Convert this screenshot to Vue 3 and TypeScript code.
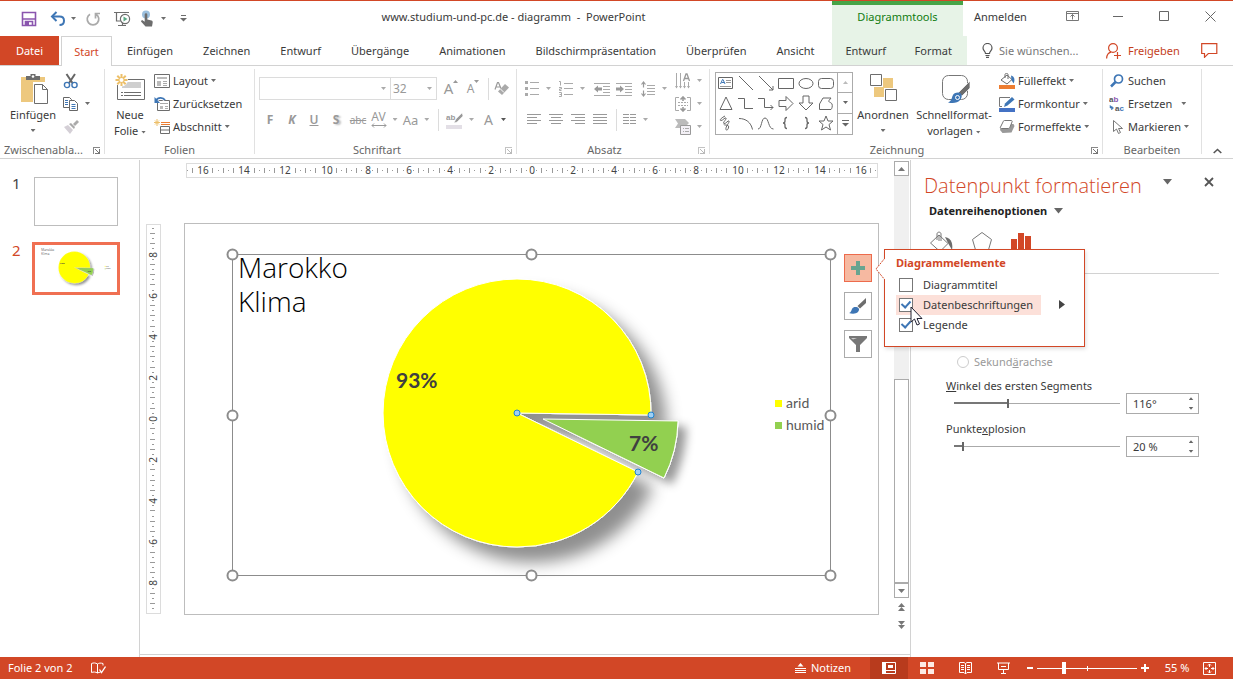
<script setup lang="ts">
import { ref } from 'vue'

interface Tick { pos: number; major: boolean }
interface Mark { pos: number; label: string }

const UNIT = 20.55

function buildTicks(range: number): Tick[] {
  const out: Tick[] = []
  for (let q = -range * 4; q <= range * 4; q++) {
    const distance = Math.abs(q) % 8
    const unit = Math.abs(q) / 4
    const gap = Math.min(distance, 8 - distance)
    if (gap === 0) continue
    if (gap === 1 && unit > 9.5) continue
    out.push({ pos: Math.round(q * UNIT / 4), major: q % 2 === 0 })
  }
  return out
}

function buildMarks(max: number): Mark[] {
  const out: Mark[] = []
  for (let v = -max; v <= max; v += 2) out.push({ pos: Math.round(v * UNIT), label: String(Math.abs(v)) })
  return out
}

const hTicks = buildTicks(16.75)
const hMarks = buildMarks(16)
const vTicks = buildTicks(9.25)
const vMarks = buildMarks(8)

const tabs = ['Einfügen', 'Zeichnen', 'Entwurf', 'Übergänge', 'Animationen', 'Bildschirmpräsentation', 'Überprüfen', 'Ansicht']

const elements = ref([
  { id: 'el-title', label: 'Diagrammtitel', on: false, hot: false },
  { id: 'el-labels', label: 'Datenbeschriftungen', on: true, hot: true },
  { id: 'el-legend', label: 'Legende', on: true, hot: false },
])

const angle = ref(116)
const explosion = ref(20)
const zoom = ref(26)

const handles = [
  [48, 31], [347, 31], [646, 31],
  [48, 192], [646, 192],
  [48, 352], [347, 352], [646, 352],
]
const points = [[333, 190], [467, 192], [454, 249]]
</script>

<template>
  <div class="window">
    <header class="titlebar">
      <div class="quick">
        <button class="flat" aria-label="Speichern">
          <svg width="16" height="16" viewBox="0 0 16 16"><path d="M1.500 1.500h13v13h-13z" fill="none" stroke="#8a55ae" stroke-width="1.600" /><path d="M1.500 8h13M4.500 14v-3.500h7V14" fill="none" stroke="#8a55ae" stroke-width="1.600" /><path d="M4 11h4v4H4z" fill="#8a55ae" /></svg>
        </button>
        <button class="flat undo" aria-label="Rückgängig">
          <svg width="16" height="16" viewBox="0 0 16 16"><path d="M2 5.500h7.500c3 0 4.500 2 4.500 4.300 0 2.500-1.700 4.200-4.500 4.200" fill="none" stroke="#3e76b5" stroke-width="2" /><path d="M6.500 1L2 5.500 6.500 10" fill="none" stroke="#3e76b5" stroke-width="2" /></svg>
          <i class="caret"></i>
        </button>
        <button class="flat redo" aria-label="Wiederholen">
          <svg width="16" height="16" viewBox="0 0 16 16"><path d="M5 3.200A5.800 5.800 0 1 0 11 3.200M10.500 7.500V2.500H15" fill="none" stroke="#aaa" stroke-width="1.700" /></svg>
        </button>
        <button class="flat show" aria-label="Bildschirmpräsentation starten">
          <svg width="17" height="16" viewBox="0 0 17 16"><path d="M0 1.500h15M2.500 2v8h4M4 14.500h8M8.500 12v2" fill="none" stroke="#6d6d6d" stroke-width="1.200" /><circle cx="11" cy="8" r="4.600" fill="#fff" stroke="#6d6d6d" stroke-width="1.200" /><path d="M9.500 5.500v5l4-2.500z" fill="#5aa884" /></svg>
        </button>
        <button class="flat touch" aria-label="Fingereingabe">
          <svg width="14" height="17" viewBox="0 0 14 17"><circle cx="6" cy="4.500" r="4" fill="#9cc0de" /><path d="M4.700 4.500a1.300 1.300 0 0 1 2.600 0v5l4.200 1c1 .3 1.300 1 1.200 2L12 16.500H5.500L1 11.500c0-1 1.500-1.500 2.200-.8l1.500 1z" fill="#6d6d6d" /></svg>
          <i class="caret"></i>
        </button>
        <button class="flat customize" aria-label="Symbolleiste anpassen">
          <svg width="7" height="7" viewBox="0 0 7 7"><path d="M1 .5h5" stroke="#6d6d6d" /><path d="M0 3h7L3.500 6.500z" fill="#6d6d6d" /></svg>
        </button>
      </div>
      <h1 class="doc-title">www.studium-und-pc.de - diagramm&nbsp; -&nbsp; PowerPoint</h1>
      <div class="title-right">
        <span class="context-title">Diagrammtools</span>
        <button class="flat signin">Anmelden</button>
        <button class="flat win" aria-label="Menübandanzeige">
          <svg width="13" height="11" viewBox="0 0 13 11"><path d="M.5.500h12v9H.5zM.5 2.500h12M6.500 8.500v-5M4.500 5.500l2-2 2 2" fill="none" stroke="#777" /></svg>
        </button>
        <button class="flat win" aria-label="Minimieren"><svg width="11" height="11" viewBox="0 0 11 11"><path d="M0 5.500h10" stroke="#666" /></svg></button>
        <button class="flat win" aria-label="Maximieren"><svg width="11" height="11" viewBox="0 0 11 11"><path d="M.5.500h9v9h-9z" fill="none" stroke="#666" /></svg></button>
        <button class="flat win" aria-label="Schließen"><svg width="11" height="11" viewBox="0 0 11 11"><path d="M.5.500l10 10M10.500.500l-10 10" stroke="#666" /></svg></button>
      </div>
    </header>

    <nav class="tabs" aria-label="Menüband">
      <button class="tab file">Datei</button>
      <button class="tab active">Start</button>
      <button v-for="t in tabs" :key="t" class="tab">{{ t }}</button>
      <div class="tabs-right">
        <div class="context-tabs">
          <button class="tab">Entwurf</button>
          <button class="tab">Format</button>
        </div>
        <label class="tellme">
          <svg width="11" height="15" viewBox="0 0 11 15"><path d="M3.500 10.500c0-2-2.500-2.800-2.500-5.500a4.500 4.500 0 0 1 9 0c0 2.700-2.500 3.500-2.500 5.500zM3.500 12.500h4M4 14.300h3" fill="none" stroke="#555" stroke-width="1.200" /></svg>
          <input type="text" placeholder="Sie wünschen..." aria-label="Sie wünschen" />
        </label>
        <button class="flat share">
          <svg width="15" height="16" viewBox="0 0 15 16"><circle cx="7" cy="5" r="4.400" fill="none" stroke="#d24726" stroke-width="1.200" /><path d="M.6 15.500c.2-3.500 1.900-5.800 4.400-6.300M8 12.500h7M11.500 9v7" fill="none" stroke="#d24726" stroke-width="1.200" /></svg>
          Freigeben
        </button>
        <button class="flat comment" aria-label="Kommentare">
          <svg width="17" height="15" viewBox="0 0 17 15"><path d="M.7.700h15.100v9.800H7.300l-3.800 3.800v-3.800H.7z" fill="none" stroke="#d24726" stroke-width="1.200" /></svg>
        </button>
      </div>
    </nav>

    <section class="ribbon">
      <div class="group g-clip">
        <div class="body">
          <button class="big paste">
            <svg width="32" height="32" viewBox="0 0 32 32"><path d="M4 5h24v25H4z" fill="#edc87e" /><path d="M9 4h4.500V2h5v2H23v4H9z" fill="#6d6d6d" /><circle cx="16" cy="4.500" r="1.300" fill="#fff" /><path d="M16 10h15v22H16z" fill="#fff" /><path d="M17.500 12.500h8l5 5v14h-13z" fill="#fff" stroke="#6d6d6d" /><path d="M25.500 12.500v5h5" fill="none" stroke="#6d6d6d" /></svg>
            <span>Einfügen</span>
            <i class="caret"></i>
          </button>
          <div class="stack">
            <button class="small" aria-label="Ausschneiden"><svg width="16" height="16" viewBox="0 0 16 16"><path d="M3.500 1l6 9M12 1L6 10" stroke="#666" stroke-width="2" /><circle cx="4" cy="12" r="2.600" fill="none" stroke="#3e76b5" stroke-width="1.400" /><circle cx="11.500" cy="12" r="2.600" fill="none" stroke="#3e76b5" stroke-width="1.400" /></svg></button>
            <button class="small" aria-label="Kopieren"><svg width="16" height="16" viewBox="0 0 16 16"><path d="M.5 1.500h6l2 2v8h-8z" fill="#fff" stroke="#666" /><path d="M6.500 4.500h5l3 3v7h-8z" fill="#fff" stroke="#666" /><path d="M2 4.500h3M2 6.500h3M2 8.500h3M8.500 8.500h4M8.500 10.500h4M8.500 12.500h4" stroke="#3e76b5" /></svg><i class="caret"></i></button>
            <button class="small" aria-label="Format übertragen"><svg width="16" height="16" viewBox="0 0 16 16"><path d="M1 8l4-2 5 5-3 4z" fill="#d4cfd6" /><path d="M6 5l2-1 4 4-1 2zM10 5l4-4 2 2-4 4z" fill="#aaa" /></svg></button>
          </div>
        </div>
        <footer>Zwischenabla...<i class="launcher"></i></footer>
      </div>

      <div class="group g-slides">
        <div class="body">
          <button class="big new">
            <svg width="32" height="32" viewBox="0 0 32 32"><path d="M3.500 7.500h27v20h-27z" fill="#fff" stroke="#6d6d6d" /><path d="M8 10h19v6H8z" fill="#cfcfcf" /><path d="M7 20.500h2M10 20.500h17M7 23.500h2M10 23.500h17" stroke="#6d6d6d" /><circle cx="7.500" cy="8" r="6.500" fill="#fff" /><path d="M7.500 2v12M1.500 8h12M3.300 3.800l8.400 8.400M11.700 3.800l-8.400 8.400" stroke="#edc06a" stroke-width="2" /><circle cx="7.500" cy="8" r="2" fill="#fff" /></svg>
            <span>Neue</span>
            <span>Folie <i class="caret"></i></span>
          </button>
          <div class="stack">
            <button class="small"><svg width="16" height="16" viewBox="0 0 16 16"><path d="M.5 1.500h15v13H.5z" fill="#fff" stroke="#6d6d6d" /><path d="M3 4h10v2H3zM3 8h4v5H3z" fill="#bbb" /><path d="M9 8.500h4M9 10.500h4M9 12.500h4" stroke="#aaa" /></svg>Layout<i class="caret"></i></button>
            <button class="small"><svg width="16" height="16" viewBox="0 0 16 16"><path d="M3.500 4.500h12v10h-12z" fill="#fff" stroke="#6d6d6d" /><path d="M6 10h3v3H6z" fill="#bbb" /><path d="M6 7.500h8M11 10.500h3M11 12.500h3" stroke="#aaa" /><path d="M2 4.500C4 1 9 1 11 4" fill="none" stroke="#fff" stroke-width="4" /><path d="M2 4.500C4 1 9 1 11 4" fill="none" stroke="#3e76b5" stroke-width="1.800" /><path d="M.5 1v6H6z" fill="#3e76b5" /></svg>Zurücksetzen</button>
            <button class="small"><svg width="16" height="16" viewBox="0 0 16 16"><path d="M6.500 7.500h9v7h-9zM6.500 11h9" fill="#fff" stroke="#6d6d6d" /><path d="M7 3.500h9M7 5.500h9" stroke="#ed7d31" /><path d="M3 0v7M0 3.500h6M1 1.500l4 4M5 1.500l-4 4" stroke="#edc06a" /></svg>Abschnitt<i class="caret"></i></button>
          </div>
        </div>
        <footer>Folien</footer>
      </div>

      <div class="group g-font">
        <div class="body rows">
          <div class="line">
            <span class="drop font-name"><select disabled aria-label="Schriftart"><option></option></select><i class="caret"></i></span>
            <span class="drop font-size"><select disabled aria-label="Schriftgrad"><option>32</option></select><i class="caret"></i></span>
            <button class="tool w22 glyph-l" aria-label="Vergrößern">A<svg width="5" height="3" viewBox="0 0 5 3"><path d="M0 3L2.500 0 5 3z" fill="#999" /></svg></button>
            <button class="tool w22 glyph-s" aria-label="Verkleinern">A<svg width="5" height="3" viewBox="0 0 5 3"><path d="M0 0h5L2.500 3z" fill="#999" /></svg></button>
            <i class="sep"></i>
            <button class="tool w22" aria-label="Formatierung löschen"><svg width="16" height="16" viewBox="0 0 16 16"><path d="M1 8.500L3.500 1.500h1l2.500 6M2.500 6h4" fill="none" stroke="#999" stroke-width="1.200" /><path d="M11 3l4 3.500L8 14l-4-3.500z" fill="#aaa" /><path d="M6.500 8l3.500 3.500" stroke="#fff" /></svg></button>
          </div>
          <div class="line styles">
            <button class="tool w22 bold">F</button>
            <button class="tool w22 bold ital">K</button>
            <button class="tool w22 under">U</button>
            <button class="tool w22 bold shade">S</button>
            <button class="tool w22 strike">abc</button>
            <button class="tool w30 av" aria-label="Zeichenabstand"><span>AV<svg width="16" height="5" viewBox="0 0 16 5"><path d="M1 2.500h14M3 .5l-2 2 2 2M13 .5l2 2-2 2" fill="none" stroke="#999" /></svg></span><i class="caret"></i></button>
            <button class="tool w34 aa">Aa<i class="caret"></i></button>
            <i class="sep"></i>
            <button class="tool w34 hl" aria-label="Texthervorhebung"><svg width="17" height="18" viewBox="0 0 17 18"><text x="0" y="9" class="mini" fill="#999">ab</text><path d="M16 2l-6 6-2 4 3-1 6-6z" fill="#999" stroke="#fff" stroke-width=".5" /><path d="M0 14h16v4H0z" fill="#e3dfe6" /></svg><i class="caret"></i></button>
            <button class="tool w30 fc">A<i class="caret dark"></i></button>
          </div>
        </div>
        <footer>Schriftart<i class="launcher dim"></i></footer>
      </div>

      <div class="group g-para">
        <div class="body">
          <div class="rows para-rows">
            <div class="line">
              <button class="tool w34" aria-label="Aufzählung"><svg width="14" height="15" viewBox="0 0 14 15"><path d="M5 1.500h9M5 7.500h9M5 13.500h9" stroke="#aaa" /><path d="M0 0h3v3H0zM0 6h3v3H0zM0 12h3v3H0z" fill="#aaa" /></svg><i class="caret"></i></button>
              <button class="tool w34" aria-label="Nummerierung"><svg width="14" height="16" viewBox="0 0 14 16"><path d="M5 2.500h9M5 7.500h9M5 13.500h9" stroke="#aaa" /><path d="M0 .5h1.500v4M0 6.500h2.500v1.500h-2v1.500h2M0 11.500h2.500v4H0M.5 13.500H2" fill="none" stroke="#aaa" /></svg><i class="caret"></i></button>
              <button class="tool w22" aria-label="Einzug verkleinern"><svg width="16" height="14" viewBox="0 0 16 14"><path d="M0 1.500h16M9 4.500h7M9 7.500h7M9 10.500h7M0 13.500h16" stroke="#aaa" /><path d="M0 7l4-3.500v2h4v3H4v2z" fill="#999" /></svg></button>
              <button class="tool w22" aria-label="Einzug vergrößern"><svg width="16" height="14" viewBox="0 0 16 14"><path d="M0 1.500h16M9 4.500h7M9 7.500h7M9 10.500h7M0 13.500h16" stroke="#aaa" /><path d="M8 7L4 3.500v2H0v3h4v2z" fill="#999" /></svg></button>
              <button class="tool w34 ls" aria-label="Zeilenabstand"><svg width="14" height="16" viewBox="0 0 14 16"><path d="M2.500 1v5.500M2.500 9.500V15M.5 3.500L2.500 1l2 2.500M.5 12.500l2 2.500 2-2.500" fill="none" stroke="#999" stroke-width="1.200" /><path d="M6 4.500h8M6 7.500h8M6 10.500h8M6 13.500h8" stroke="#aaa" /></svg><i class="caret"></i></button>
            </div>
            <div class="line">
              <button class="tool w22" aria-label="Linksbündig"><svg width="14" height="11" viewBox="0 0 14 11"><path d="M0 .5h14M0 3.500h10M0 6.500h14M0 9.500h10" stroke="#999" /></svg></button>
              <button class="tool w22" aria-label="Zentriert"><svg width="14" height="11" viewBox="0 0 14 11"><path d="M0 .5h14M2 3.500h10M0 6.500h14M2 9.500h10" stroke="#999" /></svg></button>
              <button class="tool w22" aria-label="Rechtsbündig"><svg width="14" height="11" viewBox="0 0 14 11"><path d="M0 .5h14M4 3.500h10M0 6.500h14M4 9.500h10" stroke="#999" /></svg></button>
              <button class="tool w22" aria-label="Blocksatz"><svg width="14" height="11" viewBox="0 0 14 11"><path d="M0 .5h14M0 3.500h14M0 6.500h14M0 9.500h14" stroke="#999" /></svg></button>
              <i class="sep"></i>
              <button class="tool w34" aria-label="Spalten"><svg width="13" height="11" viewBox="0 0 13 11"><path d="M0 .5h6M0 3.500h6M0 6.500h6M0 9.500h6M7 .5h6M7 3.500h6M7 6.500h6M7 9.500h6" stroke="#999" /></svg><i class="caret"></i></button>
            </div>
          </div>
          <div class="stack dim">
            <button class="small" aria-label="Textrichtung"><svg width="16" height="16" viewBox="0 0 16 16"><path d="M1.500 0v15M5.500 0v15M9.500 9v6M13.500 9v6" stroke="#aaa" /><path d="M8.500 8L11 1h1l2.500 7M9.500 5.500h4" fill="none" stroke="#999" stroke-width="1.300" /><path d="M0 13h3l-1.500 2.500zM4 13h3l-1.500 2.500zM8 13h3l-1.500 2.500zM12 13h3l-1.500 2.500z" fill="#aaa" /></svg><i class="caret"></i></button>
            <button class="small" aria-label="Text ausrichten"><svg width="16" height="16" viewBox="0 0 16 16"><path d="M4 1.500H.5v13H4M12 1.500h3.500v13H12" fill="none" stroke="#aaa" /><path d="M3 6.500h10M3 9.500h10" stroke="#aaa" stroke-dasharray="2 1" /><path d="M8 1v4M8 11v4M5.500 3.500L8 1l2.500 2.500M5.500 12.500L8 15l2.500-2.500" fill="none" stroke="#999" stroke-width="1.600" /></svg><i class="caret"></i></button>
            <button class="small" aria-label="In SmartArt konvertieren"><svg width="16" height="16" viewBox="0 0 16 16"><path d="M0 0h10l4 4-2 2H6v3H0l3-4.500z" fill="#bbb" /><path d="M5.500 6.500h10v9h-10z" fill="#f3f0f6" stroke="#999" /><path d="M8 9.500h6M8 12.500h6" stroke="#aaa" stroke-dasharray="1 1 4" /></svg><i class="caret"></i></button>
          </div>
        </div>
        <footer>Absatz<i class="launcher dim"></i></footer>
      </div>

      <div class="group g-draw">
        <div class="body">
          <div class="gallery">
            <div class="shapes">
              <button aria-label="Textfeld"><svg viewBox="0 0 16 16"><path d="M.5 2.500h14v11H.5z" /><path d="M2.500 9L4.500 4.500h.5L7 9M3.500 7.500h3" stroke="#3e76b5" /><path d="M8 5.500h5M8 7.500h5M2 11.500h11" stroke="#999" /></svg></button>
              <button aria-label="Linie"><svg viewBox="0 0 16 16"><path d="M1 1l14 14" /></svg></button>
              <button aria-label="Pfeil"><svg viewBox="0 0 16 16"><path d="M1 1l14 14M15 11v4h-4" /></svg></button>
              <button aria-label="Rechteck"><svg viewBox="0 0 16 16"><path d="M.5 3.500h15v10H.5z" /></svg></button>
              <button aria-label="Ellipse"><svg viewBox="0 0 16 16"><ellipse cx="8" cy="8.500" rx="7" ry="5" /></svg></button>
              <button aria-label="Abgerundetes Rechteck"><svg viewBox="0 0 16 16"><rect x=".5" y="3.500" width="15" height="10" rx="3" /></svg></button>
              <button aria-label="Dreieck"><svg viewBox="0 0 16 16"><path d="M8 2l6 12.500H2z" /></svg></button>
              <button aria-label="Winkelverbinder"><svg viewBox="0 0 16 16"><path d="M0 3.500h6.500v10H15" /></svg></button>
              <button aria-label="Winkelpfeil"><svg viewBox="0 0 16 16"><path d="M0 3.500h6.500v9H15M12.500 10l2.500 2.500-2.500 2.500" /></svg></button>
              <button aria-label="Pfeil rechts"><svg viewBox="0 0 16 16"><path d="M1 5.500h7V1.500l7 7-7 7v-4H1z" /></svg></button>
              <button aria-label="Pfeil unten"><svg viewBox="0 0 16 16"><path d="M5 1v7H1l7 7 7-7h-4V1z" /></svg></button>
              <button aria-label="Freihandform"><svg viewBox="0 0 16 16"><path d="M5 3h8l-2 2.500c-1 2 2 1.500 3 3.500.8 2-.2 5-1 5.500H1.500V9z" /></svg></button>
              <button aria-label="Skizze"><svg viewBox="0 0 16 16"><path d="M7 1C3 3 1 5.500 3 5.500S7 2 8 3 4 8 6 8.500 10 5 11 6 7 12 8 14.500s4-3 2-4-4 0-4-1" /></svg></button>
              <button aria-label="Bogen"><svg viewBox="0 0 16 16"><path d="M1 3.500c7 0 12 4 13.500 11" /></svg></button>
              <button aria-label="Kurve"><svg viewBox="0 0 16 16"><path d="M0 14C4 14 3 3 7 3s3 11 8.500 11" /></svg></button>
              <button aria-label="Geschweifte Klammer links"><svg viewBox="0 0 16 16"><path d="M9 2.500c-2 0-2 .8-2 2V6c0 1.200-.3 2-2 2 1.700 0 2 .8 2 2v1.500c0 1.200 0 2 2 2" stroke-width="1.300" /></svg></button>
              <button aria-label="Geschweifte Klammer rechts"><svg viewBox="0 0 16 16"><path d="M7 2.500c2 0 2 .8 2 2V6c0 1.200.3 2 2 2-1.700 0-2 .8-2 2v1.500c0 1.200 0 2-2 2" stroke-width="1.300" /></svg></button>
              <button aria-label="Stern"><svg viewBox="0 0 16 16"><path d="M8 1l2 5h5l-4 3.500 1.500 5.500L8 12l-4.500 3L5 9.500 1 6h5z" /></svg></button>
            </div>
            <div class="gal-scroll">
              <button aria-label="Nach oben" class="off"><svg width="5" height="3" viewBox="0 0 5 3"><path d="M0 3L2.500 0 5 3z" fill="#bbb" /></svg></button>
              <button aria-label="Nach unten"><svg width="5" height="3" viewBox="0 0 5 3"><path d="M0 0h5L2.500 3z" fill="#666" /></svg></button>
              <button aria-label="Weitere"><svg width="7" height="7" viewBox="0 0 7 7"><path d="M0 .5h7" stroke="#666" /><path d="M0 3h7L3.500 6.500z" fill="#666" /></svg></button>
            </div>
          </div>
          <button class="big arrange">
            <svg width="32" height="32" viewBox="0 0 32 32"><path d="M16 6h10v10H16zM7 15h10v10H7z" fill="#edc87e" /><path d="M3.500 2.500h11v11h-11zM18.500 17.500h11v11h-11z" fill="#fff" stroke="#6d6d6d" /></svg>
            <span>Anordnen</span>
            <i class="caret"></i>
          </button>
          <button class="big styles-btn">
            <svg width="32" height="32" viewBox="0 0 32 32"><rect x="4.500" y="3.500" width="25" height="24" rx="6" fill="#fff" stroke="#777" /><path d="M32 9v7l-8 8-4-3z" fill="#6d6d6d" stroke="#fff" stroke-width=".7" /><path d="M20 20.500c3.500 0 5 3.500 2.500 7-3 4-8 4-12.500 3 3-1 3.500-3.500 4.500-6.500s3-3.500 5.500-3.500z" fill="#3e76b5" /><circle cx="19.500" cy="25.500" r="2" fill="none" stroke="#fff" /></svg>
            <span>Schnellformat-</span>
            <span>vorlagen <i class="caret"></i></span>
          </button>
          <div class="stack">
            <button class="small"><svg width="16" height="16" viewBox="0 0 16 16"><path d="M8 2l5 4.500-5 4.500-6-4zM6 5V1.500c0-1.500 3-1.500 3 0V6" fill="#fff" stroke="#6d6d6d" /><path d="M12 2.500c4 1 4 5 2.500 8L12.500 7z" fill="#3e76b5" /><path d="M0 12h16v4H0z" fill="#ed7d31" /></svg>Fülleffekt<i class="caret"></i></button>
            <button class="small"><svg width="16" height="16" viewBox="0 0 16 16"><path d="M11 1.500H.5v9H3" fill="none" stroke="#777" /><path d="M13 1l2.500 2.500-7 6L5 11l1-3.500z" fill="#3e76b5" /><path d="M0 12h16v4H0z" fill="#4472c4" /></svg>Formkontur<i class="caret"></i></button>
            <button class="small"><svg width="16" height="16" viewBox="0 0 16 16"><path d="M3 5h11.500l1 2-3 6.500-9 .5-2.500-3z" fill="#999" /><path d="M5.500 1.500H12c1 0 1.500.5 1 1.500l-2 5c-.5 1-1 1.500-2 1.500H2.500c-1 0-1.500-.5-1-1.500L4 3c.5-1 .5-1.500 1.500-1.500z" fill="#fff" stroke="#777" /></svg>Formeffekte<i class="caret"></i></button>
          </div>
        </div>
        <footer>Zeichnung<i class="launcher"></i></footer>
      </div>

      <div class="group g-edit">
        <div class="body">
          <div class="stack">
            <button class="small"><svg width="14" height="14" viewBox="0 0 14 14"><circle cx="8.500" cy="5" r="4" fill="none" stroke="#3e76b5" stroke-width="1.700" /><path d="M5.500 8L1 12.500" stroke="#3e76b5" stroke-width="2.500" /></svg>Suchen</button>
            <button class="small"><svg width="16" height="19" viewBox="0 0 16 19"><text x="0" y="8" class="mini" fill="#555">a<tspan fill="#8a55ae">b</tspan></text><text x="6" y="17" class="mini" fill="#555">a<tspan fill="#3e76b5">c</tspan></text><path d="M1 11v3h2M2.500 12v4l2-2z" fill="#3e76b5" stroke="#3e76b5" stroke-width=".5" /></svg>Ersetzen<i class="caret far"></i></button>
            <button class="small"><svg width="14" height="16" viewBox="0 0 14 16"><path d="M3.500 1.500v11l3-2.500 2 4.500 2-1-2-4h4z" fill="#fff" stroke="#777" /></svg>Markieren<i class="caret"></i></button>
          </div>
        </div>
        <footer>Bearbeiten</footer>
      </div>
      <button class="flat collapse" aria-label="Menüband reduzieren"><svg width="9" height="6" viewBox="0 0 9 6"><path d="M.7 5l3.800-3.500L8.300 5" fill="none" stroke="#555" stroke-width="1.600" /></svg></button>
    </section>

    <main class="work">
      <aside class="thumbs" aria-label="Folien">
        <button class="thumb"><span class="num">1</span><span class="sheet"></span></button>
        <button class="thumb current"><span class="num">2</span><span class="sheet"><svg viewBox="0 0 695 392" aria-hidden="true"><use href="#chart" /></svg></span></button>
      </aside>

      <section class="editor">
        <svg class="ruler-h" viewBox="0 0 692 15" preserveAspectRatio="xMidYMid meet">
          <rect x=".5" y=".5" width="691" height="14" fill="#fff" stroke="#dcdcdc" />
          <g transform="translate(346 0)">
            <path v-for="t in hTicks" :key="t.pos" :d="t.major ? `M${t.pos - .5} 5v5` : `M${t.pos - .5} 7v1`" stroke="#999" />
            <text v-for="m in hMarks" :key="m.pos" :x="m.pos" y="11" text-anchor="middle" class="rule-text">{{ m.label }}</text>
          </g>
        </svg>
        <svg class="ruler-v" viewBox="0 0 15 390" preserveAspectRatio="xMidYMin meet">
          <rect x=".5" y=".5" width="14" height="389" fill="#fff" stroke="#dcdcdc" />
          <g transform="translate(0 195)">
            <path v-for="t in vTicks" :key="t.pos" :d="t.major ? `M4 ${t.pos - .5}h5` : `M6 ${t.pos - .5}h2`" stroke="#999" />
            <text v-for="m in vMarks" :key="m.pos" text-anchor="middle" class="rule-text" :transform="`translate(11 ${m.pos}) rotate(-90)`">{{ m.label }}</text>
          </g>
        </svg>

        <div class="stage">
          <svg class="slide" viewBox="0 0 695 392">
            <defs>
              <filter id="shade" x="-20%" y="-20%" width="150%" height="150%"><feDropShadow dx="15" dy="15" stdDeviation="8" flood-color="#000" flood-opacity=".44" /></filter>
              <filter id="shade-small" x="-20%" y="-30%" width="150%" height="180%"><feDropShadow dx="8" dy="6" stdDeviation="5" flood-color="#000" flood-opacity=".4" /></filter>
            </defs>
            <rect x=".5" y=".5" width="694" height="391" fill="#fff" stroke="#bdbdbd" />
            <g id="chart">
              <text class="slide-title" x="54" y="55">Marokko</text>
              <text class="slide-title" x="54" y="89">Klima</text>
              <path d="M359 196L494 198A134 134 0 0 1 480 255z" fill="#92d050" stroke="#fff" filter="url(#shade-small)" />
              <path d="M333 190L467 192A134 134 0 0 0 333 56A134 134 0 0 0 333 324A134 134 0 0 0 454 249z" fill="#ff0" stroke="#fff" filter="url(#shade)" />
              <path d="M359 196L494 198A134 134 0 0 1 480 255z" fill="#92d050" stroke="#fff" />
              <text class="pct" x="212" y="165">93%</text>
              <text class="pct" x="445" y="228">7%</text>
              <rect x="591" y="177" width="7" height="7" fill="#ff0" />
              <text class="legend" x="602" y="185">arid</text>
              <rect x="591" y="199" width="7" height="7" fill="#92d050" />
              <text class="legend" x="602" y="207">humid</text>
            </g>
            <rect x="48.500" y="31.500" width="598" height="321" fill="none" stroke="#8c8c8c" />
            <circle v-for="(h, i) in handles" :key="i" :cx="h[0] + .5" :cy="h[1] + .5" r="5" fill="#fff" stroke="#8c8c8c" stroke-width="2" />
            <circle v-for="(p, i) in points" :key="'p' + i" :cx="p[0]" :cy="p[1]" r="3" fill="#9fd0f5" stroke="#1f83d0" />
          </svg>
          <div class="chart-tools">
            <button class="on" aria-label="Diagrammelemente"><svg width="14" height="14" viewBox="0 0 14 14"><path d="M7 0v14M0 7h14" stroke="#68a490" stroke-width="4" /></svg></button>
            <button aria-label="Diagrammformatvorlagen"><svg width="18" height="18" viewBox="0 0 18 18"><path d="M17 1v5l-6 5.500L8.500 9z" fill="#6d6d6d" /><path d="M7.500 10c2.500.5 3.500 2.500 1.500 5-2 2-6 2-9 1 2-.5 2-2 3-4s2.500-2.300 4.500-2z" fill="#3e76b5" /></svg></button>
            <button aria-label="Diagrammfilter"><svg width="18" height="18" viewBox="0 0 18 18"><path d="M0 1h18v2l-7 7v7H7v-7L0 3z" fill="#777" /><path d="M2 3h6L4 4.500z" fill="#ccc" /></svg></button>
          </div>
        </div>

        <div class="scroll">
          <button class="sbtn" aria-label="Bildlauf nach oben"><svg width="7" height="4" viewBox="0 0 7 4"><path d="M0 4L3.500 0 7 4z" fill="#777" /></svg></button>
          <div class="track"></div>
          <div class="grip"></div>
          <button class="sbtn" aria-label="Bildlauf nach unten"><svg width="7" height="4" viewBox="0 0 7 4"><path d="M0 0h7L3.500 4z" fill="#777" /></svg></button>
          <button class="jump" aria-label="Vorherige Folie"><svg width="7" height="8" viewBox="0 0 7 8"><path d="M0 4L3.500 0 7 4zM0 8l3.500-4L7 8z" fill="#777" /></svg></button>
          <button class="jump" aria-label="Nächste Folie"><svg width="7" height="8" viewBox="0 0 7 8"><path d="M0 0h7L3.500 4zM0 4h7L3.500 8z" fill="#777" /></svg></button>
        </div>
      </section>

      <aside class="pane">
        <div class="pane-head">
          <h2>Datenpunkt formatieren</h2>
          <button class="flat" aria-label="Aufgabenbereichsoptionen"><svg width="9" height="6" viewBox="0 0 9 6"><path d="M0 0h9L4.500 5.500z" fill="#666" /></svg></button>
          <button class="flat close" aria-label="Bereich schließen"><svg width="10" height="10" viewBox="0 0 10 10"><path d="M1 1l8 8M9 1L1 9" stroke="#555" stroke-width="1.800" /></svg></button>
        </div>
        <button class="flat options">Datenreihenoptionen<svg width="9" height="6" viewBox="0 0 9 6"><path d="M0 0h9L4.500 5.500z" fill="#666" /></svg></button>
        <div class="pane-tabs">
          <button class="flat" aria-label="Füllung und Linie"><svg width="24" height="24" viewBox="0 0 24 24"><path d="M10 4l9 8.500-8 8L1.500 12z" fill="#fff" stroke="#777" /><path d="M8 9V3c0-2.500 4-2.500 4 0v7M10 4v6" fill="none" stroke="#777" /><path d="M16 6c7 1 8 8 7 13l-4-7z" fill="#6d6d6d" /></svg></button>
          <button class="flat" aria-label="Effekte"><svg width="22" height="24" viewBox="0 0 22 24"><path d="M11 1.500l9.500 7-3.500 12H5L1.500 8.500z" fill="#fff" stroke="#777" /></svg></button>
          <button class="flat" aria-label="Reihenoptionen"><svg width="20" height="24" viewBox="0 0 20 24"><path d="M0 8h6v16H0zM7 2h6v22H7zM14 5h6v19h-6z" fill="#d24726" /></svg></button>
        </div>
        <label class="radio"><input type="radio" name="axis" disabled /><span>Sekund<u>ä</u>rachse</span></label>
        <div class="field">
          <label for="angle"><u>W</u>inkel des ersten Segments</label>
          <input id="angle" v-model.number="angle" type="range" min="0" max="360" :style="{ '--fill': angle / 3.6 + '%' }" />
          <span class="spin"><input type="text" :value="angle + '°'" aria-label="Winkel" /><span class="arrows"><button aria-label="Winkel erhöhen"><i class="up"></i></button><button aria-label="Winkel verringern"><i class="down"></i></button></span></span>
        </div>
        <div class="field">
          <label for="explosion">Punkte<u>x</u>plosion</label>
          <input id="explosion" v-model.number="explosion" type="range" min="0" max="400" :style="{ '--fill': explosion / 4 + '%' }" />
          <span class="spin"><input type="text" :value="explosion + ' %'" aria-label="Explosion" /><span class="arrows"><button aria-label="Explosion erhöhen"><i class="up"></i></button><button aria-label="Explosion verringern"><i class="down"></i></button></span></span>
        </div>

        <div class="popup">
          <svg class="beak" width="10" height="22" viewBox="0 0 10 22"><path d="M10 0L1 11l9 11" fill="#fff" stroke="#d24726" stroke-dasharray="2 1" /></svg>
          <h3>Diagrammelemente</h3>
          <div v-for="e in elements" :key="e.id" class="option" :class="{ hot: e.hot }">
            <input :id="e.id" v-model="e.on" type="checkbox" />
            <label :for="e.id">{{ e.label }}</label>
            <svg v-if="e.hot" class="more" width="6" height="9" viewBox="0 0 6 9"><path d="M0 0l6 4.500L0 9z" fill="#444" /></svg>
            <svg v-if="e.hot" class="pointer" width="13" height="20" viewBox="0 0 13 20"><path d="M1 1v15l3.500-3 2.500 6 2.500-1-2.500-5.500h5z" fill="#fff" stroke="#223" /></svg>
          </div>
        </div>
      </aside>
    </main>

    <footer class="status">
      <span>Folie 2 von 2</span>
      <button class="spell" aria-label="Rechtschreibprüfung"><svg width="15" height="13" viewBox="0 0 15 13"><path d="M6.500 11V2C4.500.700 2.500.700.500 1.500v9c2-.7 4-.7 6 .5zM6.500 2C8 1 9.500.800 12 1.500v2M6.500 11c1-.6 2-.8 3-.8" fill="none" stroke="#fff" /><path d="M8.500 7.500l2 3 4-6" fill="none" stroke="#fff" stroke-width="1.300" /></svg></button>
      <div class="status-right">
        <button class="notes"><svg width="11" height="12" viewBox="0 0 11 12"><path d="M0 6.500h11M0 8.500h11M0 10.500h11" stroke="#fff" /><path d="M2.500 4.500L5.500 1l3 3.500z" fill="#fff" /></svg>Notizen</button>
        <button class="view active" aria-label="Normalansicht"><svg width="14" height="12" viewBox="0 0 14 12"><path d="M.5.500h13v11H.5zM3.500.500v11M3.500 8.500h10" fill="none" stroke="#fff" /><path d="M0 0h4v12H0zM6 3h5v3H6z" fill="#fff" /></svg></button>
        <button class="view" aria-label="Foliensortierung"><svg width="14" height="12" viewBox="0 0 14 12"><path d="M0 0h6v5H0zM8 0h6v5H8zM0 7h6v5H0zM8 7h6v5H8z" fill="#fdebe4" /></svg></button>
        <button class="view" aria-label="Leseansicht"><svg width="13" height="13" viewBox="0 0 13 13"><path d="M.5.500h4.500l1.500 1 1.500-1h4.500v10H8l-1.500 1.500L5 10.500H.5zM6.500 1.500v10.500M2 3.500h3M2 5.500h3M2 7.500h3M8 3.500h3M8 5.500h3M8 7.500h3" fill="none" stroke="#fff" /></svg></button>
        <button class="view" aria-label="Bildschirmpräsentation"><svg width="13" height="12" viewBox="0 0 13 12"><path d="M0 1h13M1.500 1v6.500h10V1M4 4.500h5M6.500 8v3M4 11.500h5" fill="none" stroke="#fff" /></svg></button>
        <button class="zoom-btn" aria-label="Verkleinern"><svg width="6" height="2" viewBox="0 0 6 2"><path d="M0 0h6v2H0z" fill="#fff" /></svg></button>
        <input v-model.number="zoom" class="zoom" type="range" min="0" max="100" aria-label="Zoom" />
        <button class="zoom-btn" aria-label="Vergrößern"><svg width="8" height="8" viewBox="0 0 8 8"><path d="M4 0v8M0 4h8" stroke="#fff" stroke-width="2" /></svg></button>
        <span class="percent">55 %</span>
        <button class="fit" aria-label="An Fenster anpassen"><svg width="13" height="13" viewBox="0 0 13 13"><path d="M.5.500h12v12H.5z" fill="none" stroke="#fff" /><path d="M6.500 2v3M6.500 8v3M2 6.500h3M8 6.500h3M5 3.500L6.500 2 8 3.500M5 9.500L6.500 11 8 9.500M3.500 5L2 6.500 3.500 8M9.500 5L11 6.500 9.500 8" fill="none" stroke="#fff" /></svg></button>
      </div>
    </footer>
  </div>
</template>

<style>
html, body, #app { height: 100%; }
body { margin: 0; }
</style>

<style scoped>
.window {
  display: flex;
  flex-direction: column;
  min-height: 100vh;
  box-sizing: border-box;
  border-top: 1px solid #d24726;
  background: #fff;
  color: #3a3a3a;
  font: 11px/16px "Noto Sans", "Open Sans", sans-serif;
  overflow: hidden;
}
.window * { box-sizing: border-box; }
button, input, select { font: inherit; color: inherit; margin: 0; padding: 0; border: 0; background: none; }
svg { display: block; flex: none; }
h1, h2, h3 { margin: 0; font: inherit; }
.caret { display: inline-block; flex: none; width: 5px; height: 3px; background: #6d6d6d; clip-path: polygon(0 0, 100% 0, 50% 100%); vertical-align: middle; }
.flat { display: flex; align-items: center; justify-content: center; }
.mini { font: 700 8px "Liberation Sans", sans-serif; }

.titlebar { display: flex; height: 35px; position: relative; }
.quick { display: flex; align-items: center; padding-left: 21px; flex: none; }
.undo { gap: 5px; margin-left: 13px; }
.redo { margin-left: 9px; }
.show { margin-left: 13px; }
.touch { margin-left: 9px; gap: 7px; }
.customize { margin-left: 14px; }
.doc-title { flex: 1; text-align: center; line-height: 32px; padding-left: 8px; white-space: nowrap; }
.title-right { display: flex; flex: none; width: 401px; }
.context-title { width: 131px; text-align: center; background: #e7f3e7; border-top: 4px solid #47a447; color: #107c10; line-height: 24px; }
.signin { padding: 0 15px 4px 11px; flex: 1; justify-content: flex-start; }
.win { width: 46px; padding-bottom: 4px; }

.tabs { display: flex; height: 30px; border-bottom: 1px solid #d2d2d2; }
.tab { padding: 0 15px; height: 29px; white-space: nowrap; }
.file { width: 59px; background: #d24726; color: #fff; padding: 0; margin-right: 2px; }
.active.tab { width: 51px; padding: 0; height: 30px; background: #fff; border: 1px solid #d2d2d2; border-bottom: 0; color: #d24726; }
.tabs-right { display: flex; flex: none; width: 401px; margin-left: auto; }
.context-tabs { display: flex; width: 135px; background: #e7f3e7; }
.context-tabs .tab { flex: 1; padding: 0; }
.tellme { display: flex; align-items: center; gap: 6px; width: 120px; padding-left: 15px; }
.tellme input { width: 86px; color: #777; }
.tellme input::placeholder { color: #777; opacity: 1; }
.share { gap: 7px; padding-left: 19px; color: #c43e1c; }
.comment { flex: 1; justify-content: flex-end; padding-right: 15px; }

.ribbon { display: flex; height: 93px; border-bottom: 1px solid #d2d2d2; }
.group { display: flex; flex-direction: column; flex: none; border-right: 1px solid #e1e1e1; margin: 3px 0 4px; }
.g-clip { width: 105px; }
.g-slides { width: 150px; }
.g-font { width: 262px; }
.g-para { width: 193px; }
.g-draw { width: 393px; }
.g-edit { width: 99px; }
.body { display: flex; flex: none; height: 70px; }
.group footer { position: relative; text-align: center; color: #666; line-height: 22px; height: 16px; white-space: nowrap; }
.g-clip footer { text-align: left; padding-left: 4px; }
.g-font footer { padding-right: 17px; }
.g-para footer { padding-right: 17px; }
.g-draw footer { padding-right: 18px; }
.launcher { position: absolute; right: 4px; top: 8px; width: 7px; height: 7px; border-left: 1px solid #888; border-top: 1px solid #888; }
.launcher::after { content: ""; position: absolute; right: 0; bottom: 0; width: 4px; height: 4px; border-right: 1px solid #777; border-bottom: 1px solid #777; background: linear-gradient(45deg, transparent 40%, #777 40% 60%, transparent 60%); }
.dim.launcher { opacity: .5; }
.big { display: flex; flex-direction: column; align-items: center; padding-top: 3px; flex: none; }
.big svg { margin-bottom: 3px; }
.big > .caret { margin-top: 6px; }
.paste { width: 60px; margin-left: 3px; }
.new { width: 48px; margin-left: 1px; }
.arrange { width: 60px; }
.styles-btn { width: 82px; margin-right: 4px; }
.stack { display: flex; flex-direction: column; }
.small { display: flex; align-items: center; height: 23px; gap: 3px; white-space: nowrap; }
.g-clip .small { gap: 6px; }
.small .caret.far { margin-left: 6px; }
.dim .caret, .rows .caret { background: #aaa; }
.rows .caret.dark { background: #555; }
.rows { display: flex; flex-direction: column; padding: 4px 0 0 4px; color: #999; }
.line { display: flex; align-items: center; height: 31px; }
.drop { position: relative; display: flex; height: 23px; border: 1px solid #dcdcdc; align-items: center; }
.drop select { appearance: none; width: 100%; height: 100%; padding-left: 2px; color: #999; opacity: 1; font-size: 12px; }
.drop .caret { position: absolute; right: 4px; }
.font-name { width: 132px; }
.font-size { width: 46px; border-left: 0; }
.tool { display: flex; align-items: center; justify-content: center; height: 23px; flex: none; }
.w22 { width: 22px; }
.w30 { width: 30px; gap: 6px; }
.w34 { width: 34px; gap: 6px; }
.glyph-l, .glyph-s { align-items: flex-start; }
.glyph-l { font-size: 15px; line-height: 22px; margin-left: 3px; }
.glyph-s { font-size: 12px; line-height: 24px; }
.glyph-s svg, .glyph-l svg { margin-top: 3px; }
.sep { width: 1px; height: 22px; background: #dcdcdc; margin: 0 4px 0 5px; }
.g-font .line:first-child .sep { margin: 0 2px 0 4px; }
.bold { font-weight: 700; font-size: 12px; }
.ital { font-style: italic; }
.under { font-weight: 600; font-size: 12px; text-decoration: underline; }
.shade { text-shadow: 2px 1px 2px #bbb; }
.strike { text-decoration: line-through; font-size: 10px; }
.av span { display: flex; flex-direction: column; align-items: center; font-size: 12px; line-height: 12px; }
.aa { font-size: 13px; }
.fc { font-size: 14px; gap: 8px; margin-left: 3px; }
.para-rows { padding-left: 6px; width: 158px; flex: none; }
.para-rows .w34 { justify-content: flex-start; padding-left: 2px; gap: 7px; }
.para-rows .ls { margin-left: 4px; }
.g-para .small { gap: 6px; }
.g-draw .gallery { display: flex; flex: none; width: 138px; height: 63px; margin: 3px 0 0 5px; border: 1px solid #ababab; }
.shapes { display: grid; grid-template-columns: repeat(6, 20px); grid-template-rows: repeat(3, 20px); width: 121px; }
.shapes button { display: flex; align-items: center; justify-content: center; }
.shapes svg { width: 16px; height: 16px; fill: none; stroke: #666; }
.gal-scroll { display: grid; grid-template-rows: repeat(3, 1fr); flex: 1; border-left: 1px solid #ababab; }
.gal-scroll button { display: flex; align-items: center; justify-content: center; border-bottom: 1px solid #ababab; }
.gal-scroll button:last-child { border-bottom: 0; }
.g-edit .stack { padding-left: 6px; }
.g-edit .small svg { width: 16px; }
.collapse { flex: 1; align-items: flex-end; padding-bottom: 4px; }

.work { display: flex; flex: 1; min-height: 0; padding-top: 1px; }
.thumbs { width: 140px; flex: none; border-right: 1px solid #d2d2d2; padding: 15px 0 0 12px; }
.thumb { display: flex; align-items: flex-start; gap: 11px; margin-bottom: 14px; }
.num { width: 9px; font-size: 15px; line-height: 16px; color: #444; text-align: left; }
.sheet { display: block; width: 84px; height: 49px; margin: 2px; border: 1px solid #bdbdbd; }
.current .num { color: #d24726; }
.current .sheet { margin: 0; width: 88px; height: 53px; border: 3px solid #f07052; }
.editor {
  flex: 1;
  min-width: 0;
  display: grid;
  grid-template-columns: 15px minmax(0, 1fr) 15px;
  grid-template-rows: 15px 45px auto 1fr;
  padding: 3px 1px 0 6px;
  margin-bottom: 2px;
  border-bottom: 1px solid #d2d2d2;
}
.ruler-h { grid-column: 2; grid-row: 1; margin: 0 16px 0 25px; width: calc(100% - 41px); height: 15px; }
.ruler-v { grid-column: 1; grid-row: 3; width: 15px; height: 390px; margin-top: 1px; }
.rule-text { font-size: 10px; fill: #444; }
.stage { grid-column: 2; grid-row: 3; margin: 0 15px 0 23px; position: relative; align-self: start; }
.slide { width: 100%; }
.slide-title { font: 300 28px "Open Sans", sans-serif; fill: #000; }
.pct { font: 700 21px Lato, sans-serif; fill: #404040; }
.legend { font: 14px Lato, sans-serif; fill: #595959; }
.chart-tools { position: absolute; top: 31px; right: 7px; display: flex; flex-direction: column; gap: 10px; }
.chart-tools button { display: flex; align-items: center; justify-content: center; width: 28px; height: 28px; border: 1px solid #ababab; background: #fff; }
.chart-tools .on { background: #f6b9a1; border-color: #ed6b4c; }
.scroll { grid-column: 3; grid-row: 1 / 5; display: flex; flex-direction: column; margin-top: -2px; }
.sbtn { display: flex; align-items: center; justify-content: center; height: 15px; border: 1px solid #ababab; flex: none; }
.track { flex: 1; background: #f0f0f0; }
.grip { flex: 1; border: 1px solid #ababab; }
.jump { display: flex; align-items: center; justify-content: center; height: 18px; }
.jump:last-child { margin-bottom: 20px; }

.pane { position: relative; width: 323px; flex: none; border-left: 1px solid #d2d2d2; padding: 13px 14px 0 13px; }
.pane-head { display: flex; align-items: flex-start; height: 26px; }
.pane-head h2 { font: 300 20px/26px "Open Sans", sans-serif; color: #d24726; flex: 1; white-space: nowrap; }
.pane-head button { height: 18px; }
.pane-head .close { margin: 0 5px 0 32px; }
.options { font-weight: 700; gap: 7px; padding-left: 5px; margin-top: 4px; color: #222; }
.pane-tabs { display: flex; gap: 18px; padding-left: 5px; margin-top: 12px; border-bottom: 1px solid #d2d2d2; height: 43px; align-items: flex-start; }
.radio { display: flex; align-items: center; gap: 5px; margin: 80px 0 0 33px; color: #999; }
.radio input { appearance: none; width: 12px; height: 12px; border: 1px solid #ccc; border-radius: 50%; }
.field { display: grid; grid-template-columns: 166px 73px; column-gap: 6px; padding-left: 30px; margin-top: 8px; }
.field + .field { margin-top: 7px; }
.field label { grid-column: 1 / 3; height: 15px; margin-left: -8px; }
.field input[type=range] { appearance: none; width: 166px; height: 20px; background: linear-gradient(#777, #777) left center / var(--fill) 2px no-repeat, linear-gradient(#aaa, #aaa) left center / 100% 1px no-repeat; }
.field input[type=range]::-webkit-slider-thumb { appearance: none; width: 2px; height: 9px; background: #666; }
.spin { display: flex; height: 21px; border: 1px solid #ababab; }
.spin input { width: 50px; padding-left: 6px; }
.arrows { display: flex; flex-direction: column; width: 14px; margin-left: auto; }
.arrows button { flex: 1; display: flex; align-items: center; justify-content: center; }
.up, .down { width: 5px; height: 3px; background: #666; clip-path: polygon(0 0, 100% 0, 50% 100%); }
.up { clip-path: polygon(50% 0, 100% 100%, 0 100%); }
.popup { position: absolute; left: -27px; top: 89px; width: 201px; height: 98px; background: #fff; border: 1px solid #d24726; padding: 5px 0 0 11px; box-shadow: 1px 2px 4px #0002; }
.beak { position: absolute; left: -10px; top: 8px; }
.popup h3 { font-weight: 700; color: #d24726; line-height: 16px; margin-bottom: 4px; }
.option { position: relative; display: flex; align-items: center; height: 20px; width: 145px; padding-left: 3px; gap: 10px; }
.hot { background: #fce0d9; }
.option input { appearance: none; position: relative; flex: none; width: 14px; height: 14px; border: 1px solid #777; background: #fff; }
.option input:checked::after { content: ""; position: absolute; left: 3px; top: 0; width: 4px; height: 7px; border: solid #3e76b5; border-width: 0 2px 2px 0; transform: rotate(42deg); }
.option label { white-space: nowrap; }
.more { position: absolute; right: -24px; top: 5px; }
.pointer { position: absolute; left: 14px; top: 11px; z-index: 2; }

.status { display: flex; align-items: center; height: 22px; flex: none; background: #d24726; color: #fff; padding-left: 8px; }
.status button { display: flex; align-items: center; justify-content: center; height: 22px; }
.spell { margin-left: 19px; }
.status-right { display: flex; align-items: center; margin-left: auto; }
.notes { width: 79px; gap: 5px; padding-left: 4px; }
.status .notes { justify-content: flex-start; }
.view { width: 38px; }
.view.active { background: #b83b1d; }
.zoom-btn { width: 15px; }
.zoom { appearance: none; width: 100px; height: 16px; background: linear-gradient(#fff, #fff) center / 1px 5px no-repeat, linear-gradient(#fff, #fff) center / 100% 1px no-repeat; }
.zoom::-webkit-slider-thumb { appearance: none; width: 4px; height: 12px; background: #fff; }
.percent { width: 50px; text-align: center; }
.fit { width: 31px; }
.status .fit { justify-content: flex-start; padding-left: 1px; }
</style>
